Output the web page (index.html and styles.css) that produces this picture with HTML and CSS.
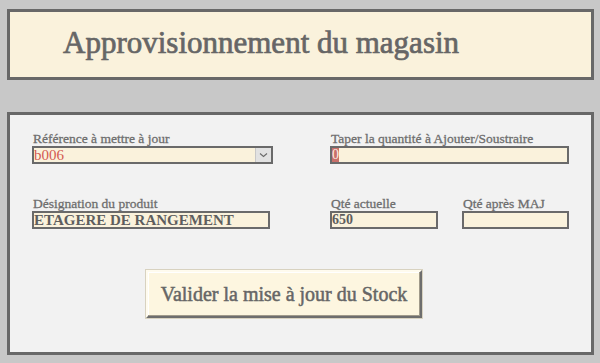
FILE: index.html
```html
<!DOCTYPE html>
<html lang="fr">
<head>
<meta charset="utf-8">
<title>Approvisionnement du magasin</title>
<link rel="stylesheet" href="styles.css">
</head>
<body>
<div class="page">
  <header class="title-box">
    <h1 class="title">Approvisionnement du magasin</h1>
  </header>
  <main class="panel">
    <div class="row row-top">
      <div class="field field-ref">
        <label class="label">Référence à mettre à jour</label>
        <div class="box combo">
          <span class="value red">b006</span>
          <span class="drop">
            <svg width="9" height="6" viewBox="0 0 9 6"><path d="M1 1.5 L4.5 4.5 L8 1.5" fill="none" stroke="#6a6a6a" stroke-width="1.1"/></svg>
          </span>
        </div>
      </div>
      <div class="field field-qty">
        <label class="label">Taper la quantité à Ajouter/Soustraire</label>
        <div class="box"><span class="sel">0</span></div>
      </div>
    </div>
    <div class="row row-bottom">
      <div class="field field-des">
        <label class="label">Désignation du produit</label>
        <div class="box"><span class="value caps">ETAGERE DE RANGEMENT</span></div>
      </div>
      <div class="field field-cur">
        <label class="label">Qté actuelle</label>
        <div class="box"><span class="value num">650</span></div>
      </div>
      <div class="field field-after">
        <label class="label">Qté après MAJ</label>
        <div class="box"></div>
      </div>
    </div>
    <button class="btn" type="button">Valider la mise à jour du Stock</button>
  </main>
</div>
</body>
</html>
```

FILE: styles.css
```css
* { box-sizing: border-box; }
html, body { margin: 0; padding: 0; }
body {
  background: #c8c8c8;
  width: 600px;
  height: 363px;
  overflow: hidden;
  font-family: "Liberation Serif", "DejaVu Serif", serif;
  color: #666;
}
.page {
  display: flex;
  flex-direction: column;
  padding: 9px 6px 0 7px;
}
.title-box {
  height: 71px;
  border: 3px solid #686868;
  background: #faf2dc;
  display: flex;
  align-items: center;
  padding-left: 53px;
}
.title {
  margin: 0;
  font-size: 31px;
  font-weight: normal;
  -webkit-text-stroke: 0.7px #666;
  color: #666;
  line-height: 1;
  position: relative;
  top: -2px;
}
.panel {
  margin-top: 32px;
  height: 243px;
  border: 3px solid #686868;
  background: #f2f2f2;
  padding: 16px 0 0 22px;
  display: flex;
  flex-direction: column;
}
.row { display: flex; }
.row-bottom { margin-top: 32px; }
.field { display: flex; flex-direction: column; }
.field-ref { width: 298px; }
.field-ref .box { width: 241px; }
.field-qty .box { width: 239px; }
.field-des { width: 298px; }
.field-des .box { width: 238px; }
.field-cur { width: 132px; }
.field-cur .box { width: 108px; }
.field-after .box { width: 107px; }
.label {
  font-size: 13.5px;
  line-height: 15px;
  height: 15px;
  font-weight: normal;
  -webkit-text-stroke: 0.3px #6e6e6e;
  color: #6e6e6e;
  padding-left: 1px;
  white-space: nowrap;
}
.box {
  height: 18px;
  border: 2px solid #6a6a6a;
  background: #faf2dc;
  display: flex;
  align-items: center;
  overflow: hidden;
}
.value {
  font-size: 15px;
  line-height: 14px;
  white-space: nowrap;
}
.red { color: #d45a52; }
.caps { font-weight: bold; color: #5e5e5e; font-size: 15px; }
.num { font-weight: bold; color: #5e5e5e; font-size: 14px; }
.combo { justify-content: space-between; }
.drop {
  width: 16px;
  height: 100%;
  background: #e2e2e2;
  border-left: 1px solid #c8c8c8;
  display: flex;
  align-items: center;
  justify-content: center;
}
.sel {
  background: #c8706a;
  color: #fbeee4;
  height: 100%;
  width: 7px;
  font-size: 14px;
  line-height: 14px;
  display: flex;
  align-items: center;
  justify-content: center;
}
.btn {
  margin: 41px 0 0 114px;
  width: 276px;
  height: 48px;
  background: #fdf6e0;
  border: 2px solid;
  border-color: #fffbee #6e6e6e #6e6e6e #fffbee;
  box-shadow: inset -1px -1px 0 #a09a8a, inset 1px 1px 0 #ffffff, 0 0 0 1px #d8d2c0;
  font-family: "Liberation Serif", "DejaVu Serif", serif;
  font-size: 20px;
  font-weight: normal;
  -webkit-text-stroke: 0.5px #666;
  color: #666;
  padding: 0;
  cursor: pointer;
}
```
